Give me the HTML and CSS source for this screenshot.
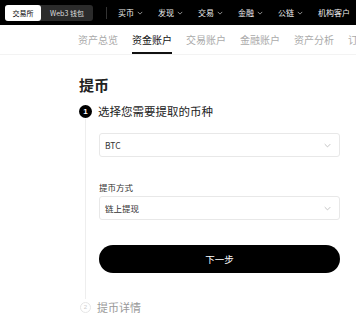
FILE: index.html
```html
<!DOCTYPE html>
<html lang="zh">
<head>
<meta charset="utf-8">
<link rel="stylesheet" href="styles.css">
</head>
<body>
<header class="topbar">
  <div class="seg">
    <span class="seg-item active">交易所</span>
    <span class="seg-item">Web3 钱包</span>
  </div>
  <span class="divider"></span>
  <nav class="nav">
    <span class="nav-item">买币<svg class="chev" viewBox="0 0 8 5"><path d="M1 1l3 3 3-3" fill="none" stroke="currentColor" stroke-width="1"/></svg></span>
    <span class="nav-item">发现<svg class="chev" viewBox="0 0 8 5"><path d="M1 1l3 3 3-3" fill="none" stroke="currentColor" stroke-width="1"/></svg></span>
    <span class="nav-item">交易<svg class="chev" viewBox="0 0 8 5"><path d="M1 1l3 3 3-3" fill="none" stroke="currentColor" stroke-width="1"/></svg></span>
    <span class="nav-item">金融<svg class="chev" viewBox="0 0 8 5"><path d="M1 1l3 3 3-3" fill="none" stroke="currentColor" stroke-width="1"/></svg></span>
    <span class="nav-item">公链<svg class="chev" viewBox="0 0 8 5"><path d="M1 1l3 3 3-3" fill="none" stroke="currentColor" stroke-width="1"/></svg></span>
    <span class="nav-item">机构客户</span>
  </nav>
</header>
<div class="subnav">
  <span class="sub-item">资产总览</span>
  <span class="sub-item active">资金账户</span>
  <span class="sub-item">交易账户</span>
  <span class="sub-item">金融账户</span>
  <span class="sub-item">资产分析</span>
  <span class="sub-item">订单中心</span>
</div>
<main class="main">
  <h1 class="title">提币</h1>
  <section class="step">
    <div class="step-head">
      <span class="num">1</span>
      <span class="step-title">选择您需要提取的币种</span>
    </div>
    <div class="step-body">
      <div class="select">
        <span>BTC</span>
        <svg class="sel-chev" viewBox="0 0 10 6"><path d="M1 1l4 4 4-4" fill="none" stroke="#aaa" stroke-width="1"/></svg>
      </div>
      <div class="label">提币方式</div>
      <div class="select">
        <span>链上提现</span>
        <svg class="sel-chev" viewBox="0 0 10 6"><path d="M1 1l4 4 4-4" fill="none" stroke="#aaa" stroke-width="1"/></svg>
      </div>
      <button class="btn">下一步</button>
    </div>
  </section>
  <section class="step step2">
    <div class="step-head">
      <span class="num num2">2</span>
      <span class="step-title gray">提币详情</span>
    </div>
  </section>
</main>
</body>
</html>
```
FILE: styles.css
```css
* { box-sizing: border-box; }
html, body { margin: 0; padding: 0; }
body {
  width: 356px;
  height: 321px;
  overflow: hidden;
  background: #fff;
  font-family: "Noto Sans CJK SC", "Noto Sans", sans-serif;
  color: #111;
}
.topbar {
  height: 25px;
  background: #000;
  display: flex;
  align-items: center;
  padding-left: 5px;
  white-space: nowrap;
  overflow: hidden;
}
.seg {
  display: flex;
  background: #2b2b2b;
  border-radius: 3px;
  height: 16px;
  width: 88px;
  flex-shrink: 0;
}
.seg-item {
  font-size: 7px;
  line-height: 16px;
  color: #ddd;
  padding: 0 6px;
  text-align: center;
}
.seg-item.active {
  background: #fff;
  color: #000;
  border-radius: 3px;
  width: 36px;
  padding: 0;
}
.seg-item:last-child { flex: 1; padding: 0; }
.divider {
  width: 1px;
  height: 12px;
  background: #333;
  margin: 0 11px 0 13px;
  flex-shrink: 0;
}
.nav { display: flex; gap: 15px; }
.nav-item {
  font-size: 8px;
  color: #eee;
  display: flex;
  align-items: center;
  gap: 3px;
}
.chev { width: 6px; height: 4px; color: #bbb; }
.subnav {
  display: flex;
  gap: 14px;
  padding-left: 78px;
  height: 30px;
  align-items: stretch;
  white-space: nowrap;
  overflow: hidden;
  border-bottom: 1px solid #f3f3f3;
}
.sub-item {
  font-size: 10px;
  color: #aaa;
  display: flex;
  align-items: center;
  padding-top: 1px;
  border-bottom: 2px solid transparent;
  flex-shrink: 0;
}
.sub-item.active { color: #111; border-bottom-color: #111; }
.main { padding: 20px 16px 0 79px; }
.title {
  margin: 0;
  font-size: 15px;
  font-weight: 700;
  line-height: 20px;
  color: #222;
}
.step { margin-top: 8px; }
.step-head { display: flex; align-items: center; gap: 6px; height: 16px; }
.num {
  width: 13px;
  height: 13px;
  border-radius: 50%;
  background: #000;
  color: #fff;
  font-size: 8px;
  font-weight: 700;
  display: flex;
  align-items: center;
  justify-content: center;
  font-family: "Liberation Sans", sans-serif;
}
.step-title { font-size: 11.5px; color: #222; }
.step-body {
  margin-left: 6px;
  border-left: 1px solid #eee;
  padding: 14px 0 26px 13px;
}
.select {
  height: 24px;
  border: 1px solid #e8e8e8;
  border-radius: 3px;
  display: flex;
  align-items: center;
  justify-content: space-between;
  padding: 0 8px 0 5px;
  font-size: 8.5px;
  color: #333;
}
.sel-chev { width: 7px; height: 5px; }
.label {
  font-size: 8.5px;
  color: #333;
  margin-top: 25px;
  margin-bottom: 3px;
  line-height: 11px;
}
.btn {
  display: block;
  width: 100%;
  margin-top: 25px;
  height: 28px;
  border: none;
  border-radius: 14px;
  background: #000;
  color: #fff;
  font-family: inherit;
  font-size: 9.5px;
}
.step2 { margin-top: 0; }
.num2 {
  background: #fff;
  border: 1px solid #e6e6e6;
  color: #ccc;
  font-weight: 400;
  font-size: 6px;
  width: 11px;
  height: 11px;
  margin-left: 1px;
}
.step-title.gray { color: #999; font-size: 11px; }
```
